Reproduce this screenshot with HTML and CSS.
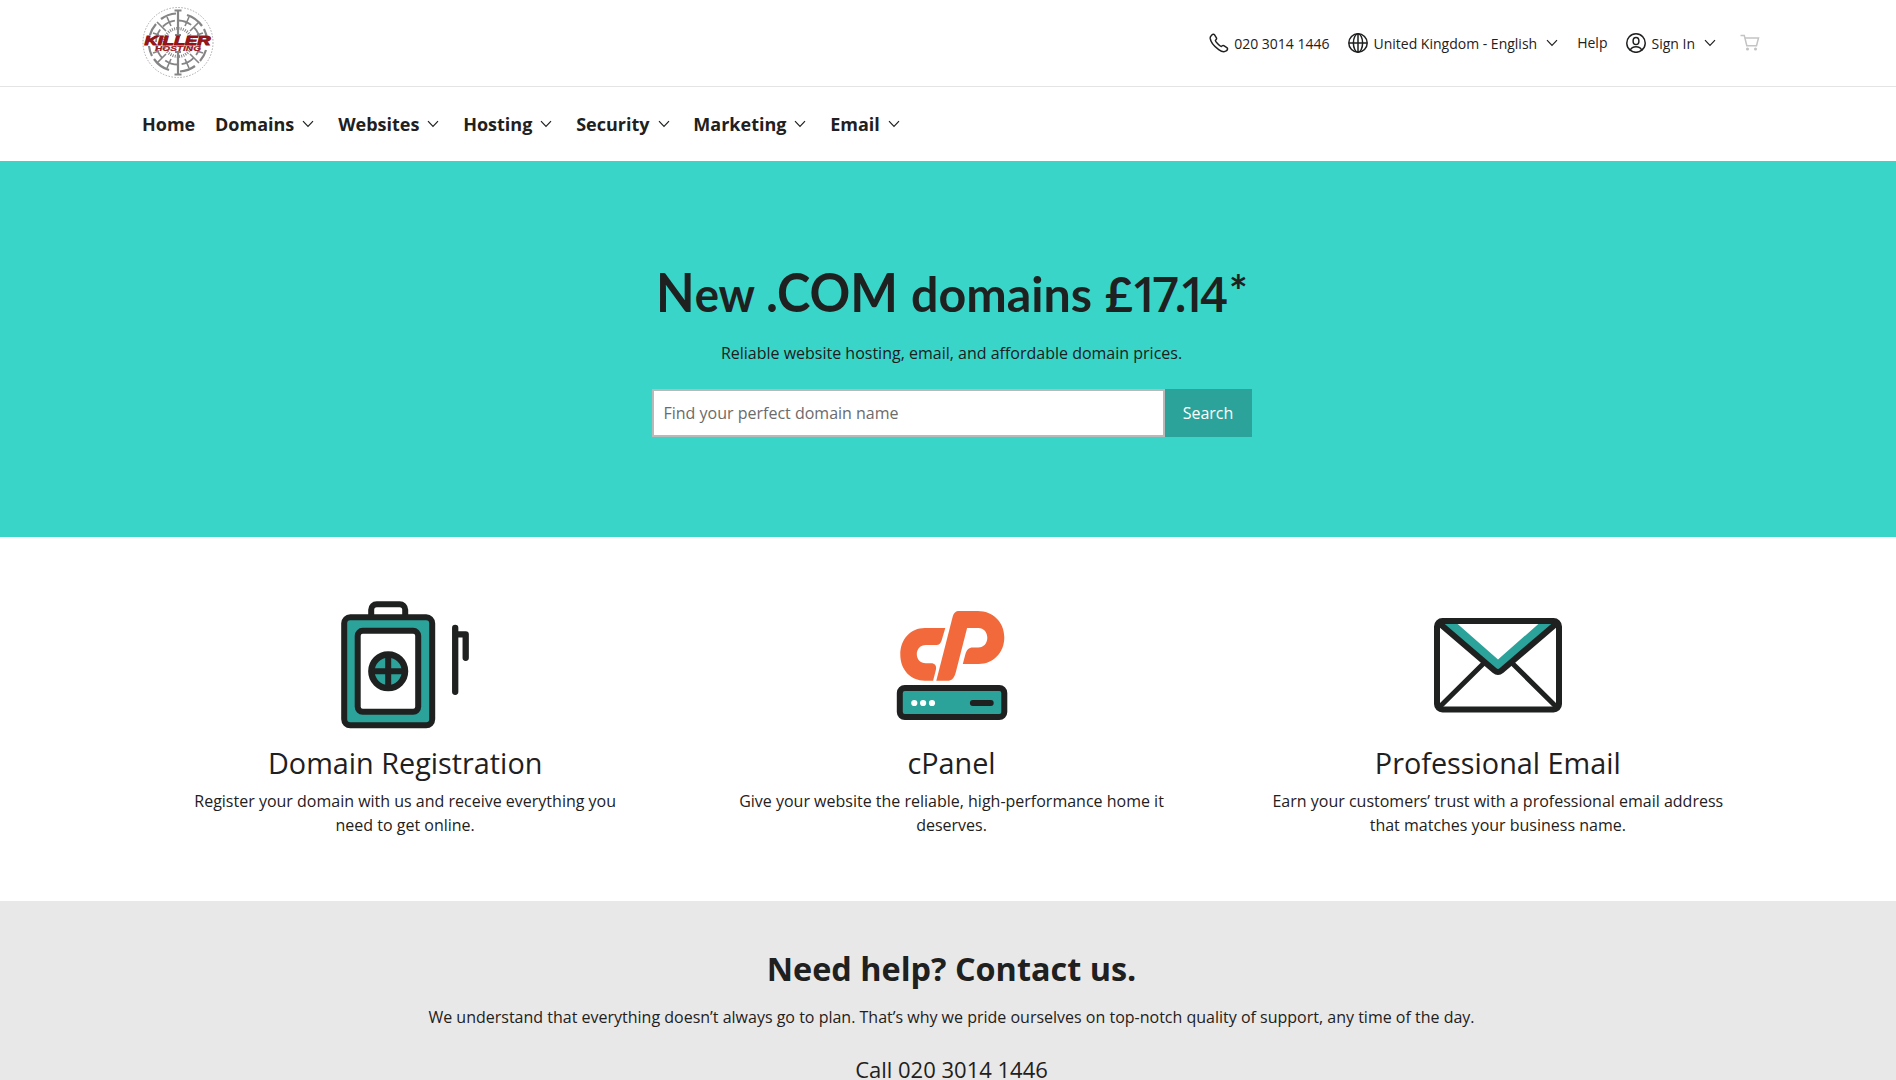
FILE: index.html
```html
<!DOCTYPE html>
<html lang="en-GB">
<head>
<meta charset="utf-8">
<title>Killer Hosting</title>
<link rel="stylesheet" href="styles.css">
</head>
<body>
<svg width="0" height="0" class="sprite"><symbol id="chev" viewBox="0 0 12 8"><path d="M1 1.2 6 6.4 11 1.2" fill="none" stroke="currentColor" stroke-width="1.2"/></symbol></svg>
<header class="topbar">
  <a class="logo" href="#">
    <svg width="72" height="74" viewBox="0 0 72 74">
      <circle cx="36" cy="36.500" r="35" fill="none" stroke="#aaa" stroke-width="1" stroke-dasharray="1.5 1.5"/>
      <g fill="none" stroke="#858585">
        <path d="M36 5V30M36 45V68" stroke-width="2.200"/>
        <path d="M32.500 4.500h7M32.500 68.500h7M33 29h6M33 46h6" stroke-width="2"/>
        <path d="M34 7.500A29 29 0 0 0 19 13M38 65.500A29 29 0 0 0 53 60M45 9A29 29 0 0 1 60 20M27 64A29 29 0 0 1 12 53M8 29A29 29 0 0 1 14 18M64 44A29 29 0 0 1 58 55M7 40A29 29 0 0 0 10 50M65 33A29 29 0 0 0 62 23" stroke-width="2.200"/>
        <circle cx="36" cy="36.500" r="22" stroke-width="1.800" stroke-dasharray="13.300 4"/>
        <circle cx="36" cy="36.500" r="14" stroke-width="3" stroke-dasharray="1 1.2"/>
        <path d="M15 16l9 9M57 16l-9 9M15 57l9-9M57 57l-9-9M25 11l4 9M47 11l-4 9M25 62l4-9M47 62l-4-9M11 27l6 2M61 27l-6 2M11 47l6-2M61 47l-6-2" stroke-width="1.600"/>
      </g>
      <text class="logo-name" x="2.500" y="39" textLength="66" lengthAdjust="spacingAndGlyphs">KILLER</text>
      <text class="logo-sub" x="13" y="45" textLength="46" lengthAdjust="spacingAndGlyphs">HOSTING</text>
    </svg>
  </a>
  <div class="tools">
    <a class="phone"><svg width="20" height="20" viewBox="0 0 20 20"><path d="M2.200 2.700C3.700.8 4.900.9 5.600 1.900L7.400 4.800C8.100 6 7 6.700 6.400 7.400 6.100 8.300 10.900 13.600 12.200 13.500 13.200 12.900 13.700 12 14.800 12.700L17.800 14.600C18.900 15.400 18.800 16.600 17.300 17.800 15.400 19.400 12.300 18.500 9.700 16.600 5.400 13.500 1.700 9.200 1.200 5.400 1.100 4.300 1.500 3.400 2.200 2.700Z"/></svg><span>020 3014 1446</span></a>
    <a class="region"><svg width="20" height="20" viewBox="0 0 20 20"><circle cx="10" cy="10" r="9.200"/><ellipse cx="10" cy="10" rx="4.600" ry="9.200"/><path d="M10 1v18M1 10h18"/></svg><span>United Kingdom - English</span><svg class="chev" width="12" height="8"><use href="#chev"/></svg></a>
    <a class="help"><span>Help</span></a>
    <a class="signin"><svg width="20" height="20" viewBox="0 0 20 20"><path d="M4.200 17.200A9.200 9.200 0 1 1 15.800 17.200"/><ellipse cx="10" cy="8" rx="2.900" ry="3.600"/><path d="M4.200 17.200C5.300 14.600 7.200 13.700 10 13.700S14.700 14.600 15.800 17.200C12.400 20 7.600 20 4.200 17.200Z"/></svg><span>Sign In</span><svg class="chev" width="12" height="8"><use href="#chev"/></svg></a>
    <a class="cart"><svg width="20" height="18" viewBox="0 0 20 18"><path d="M.5 1.500h3.800l2.500 10.200h9.700l2-7.700H5"/><circle cx="7.500" cy="15" r=".8"/><circle cx="15.500" cy="15" r=".8"/></svg></a>
  </div>
</header>
<nav class="menu">
  <a class="home">Home</a>
  <a>Domains<svg class="chev" width="12" height="8"><use href="#chev"/></svg></a>
  <a>Websites<svg class="chev" width="12" height="8"><use href="#chev"/></svg></a>
  <a>Hosting<svg class="chev" width="12" height="8"><use href="#chev"/></svg></a>
  <a>Security<svg class="chev" width="12" height="8"><use href="#chev"/></svg></a>
  <a>Marketing<svg class="chev" width="12" height="8"><use href="#chev"/></svg></a>
  <a>Email<svg class="chev" width="12" height="8"><use href="#chev"/></svg></a>
</nav>
<section class="hero">
  <h1>
    <svg width="600" height="68" viewBox="0 0 600 68">
      <text x="4" y="53" textLength="99" lengthAdjust="spacingAndGlyphs">N<tspan class="lower">ew</tspan></text>
      <text x="114" y="53" textLength="132" lengthAdjust="spacingAndGlyphs">.COM</text>
      <text class="lower" x="259" y="53" textLength="181" lengthAdjust="spacingAndGlyphs">domains</text>
      <text y="53"><tspan class="pound" x="453">£</tspan><tspan class="digits" x="479 500 522 527 548">17.14</tspan><tspan class="star" x="577" dy="-5">*</tspan></text>
    </svg>
  </h1>
  <p>Reliable website hosting, email, and affordable domain prices.</p>
  <form class="search"><input type="text" placeholder="Find your perfect domain name"><button type="button">Search</button></form>
</section>
<section class="features">
  <article>
    <svg width="128" height="128" viewBox="0.3 0.2 128 128">
      <path d="M30.500 15V9a5.500 5.500 0 0 1 5.500-5.500h23a5.500 5.500 0 0 1 5.500 5.500v6" fill="none" stroke="#1f2020" stroke-width="6"/>
      <rect x="3.500" y="16.500" width="88" height="108" rx="6" fill="#2ba39b" stroke="#1f2020" stroke-width="6"/>
      <rect x="17" y="30" width="60.500" height="81" rx="5" fill="#fff" stroke="#1f2020" stroke-width="6"/>
      <circle cx="47.500" cy="70.500" r="16.800" fill="#2ba39b" stroke="#1f2020" stroke-width="6.500"/>
      <path d="M47.500 54v33M31 70.500h33" stroke="#1f2020" stroke-width="6"/>
      <path d="M114.500 27v64M114.500 33.500H125V57" fill="none" stroke="#1f2020" stroke-width="6.300" stroke-linecap="round" stroke-linejoin="round"/>
    </svg>
    <h2>Domain Registration</h2>
    <p>Register your domain with us and receive everything you<br>need to get online.</p>
  </article>
  <article>
    <svg width="128" height="128" viewBox="-0.8 0 128 128">
      <g fill="#f26a3b">
        <path d="M57.500 27H37C23 27 12.500 38 12.500 53.500S23 79.700 37 79.700h8.300l2.700-10.500c1.200-4.500-1-7-4.800-7H38c-5.500 0-9-4-9-9s3.500-9.200 9-9.200h10.500c3 0 4.500-2 5.300-4.500Z"/>
        <path d="M71.500 10H90c15 0 26.500 11 26.500 26.500S105 63 91 63H75l2.500-9.500c1.200-4.500 3.500-7 7.500-7h5.500c5.500 0 9-4.500 9-9.800s-3.500-9.700-9-9.700H79.300L68 71.200c-1.500 6-4 8.500-8.500 8.500H48.500L64.800 16c1.200-4.300 3-6 6.700-6Z"/>
      </g>
      <rect x="12" y="87" width="104.500" height="29" rx="5" fill="#2ba39b" stroke="#1f2020" stroke-width="6"/>
      <g fill="#fff"><circle cx="26.500" cy="102" r="3.100"/><circle cx="35.300" cy="102" r="3.100"/><circle cx="44.200" cy="102" r="3.100"/></g>
      <path d="M85 102h18" stroke="#1f2020" stroke-width="5.800" stroke-linecap="round"/>
    </svg>
    <h2>cPanel</h2>
    <p>Give your website the reliable, high-performance home it<br>deserves.</p>
  </article>
  <article>
    <svg width="128" height="128" viewBox="0 0 128 128">
      <path d="M8 22 64 71.500 120 22h-14.500L64 58.500 22.500 22Z" fill="#2ba39b"/>
      <rect x="3" y="20" width="122" height="88.500" rx="5.500" fill="none" stroke="#1f2020" stroke-width="6"/>
      <path d="M5 22 60.500 69.500q3.500 3 7 0L123 22" fill="none" stroke="#1f2020" stroke-width="6"/>
      <path d="M4.500 107 50 62M123.500 107 78 62" stroke="#1f2020" stroke-width="5"/>
    </svg>
    <h2>Professional Email</h2>
    <p>Earn your customers’ trust with a professional email address<br>that matches your business name.</p>
  </article>
</section>
<section class="contact">
  <h2>Need help? Contact us.</h2>
  <p>We understand that everything doesn’t always go to plan. That’s why we pride ourselves on top-notch quality of support, any time of the day.</p>
  <p class="call">Call 020 3014 1446</p>
</section>
</body>
</html>
```
FILE: styles.css
```css
* { box-sizing: border-box; }
body {
  margin: 0;
  height: 1080px;
  overflow: hidden;
  background: #fff;
  color: #1f2020;
  font: 16px/24px "Open Sans", "Liberation Sans", sans-serif;
}
h1, h2, p { margin: 0; }
.sprite { display: none; }
.topbar {
  height: 87px;
  padding: 0 137px 0 142px;
  border-bottom: 1px solid #e4e4e4;
  display: flex;
  align-items: center;
  justify-content: space-between;
}
.logo { display: flex; }
.logo-name, .logo-sub {
  fill: #a4161a;
  stroke: #8c1418;
  font-family: "Liberation Sans", sans-serif;
  font-weight: 700;
  font-style: italic;
}
.logo-name { font-size: 13px; stroke-width: 1px; }
.logo-sub { font-size: 6.5px; stroke-width: .2px; }
.tools { display: flex; font-size: 14px; margin-right: -6px; }
.tools a { display: flex; align-items: center; }
.tools svg { fill: none; stroke: #1f2020; stroke-width: 1.5; }
.tools a > svg:first-child { margin-right: 5px; }
.tools span { padding-top: 1px; }
.chev { margin-left: 9px; }
.region { margin-left: 19px; }
.help { margin-left: 19px; }
.tools .help span { padding: 0; }
.signin { margin-left: 19px; }
.cart { margin-left: 24px; }
.tools .cart svg { stroke: #c4c4c4; margin: 0; }
.menu {
  height: 74px;
  padding-left: 142px;
  display: flex;
  align-items: center;
  gap: 23.8px;
  font-size: 18px;
  font-weight: 700;
}
.menu a { display: flex; align-items: center; }
.menu .home { margin-right: -4px; }
.menu .chev { margin-left: 8px; }
.hero {
  height: 376px;
  padding: 98px 0 0 7px;
  background: #39d5c9;
  display: flex;
  flex-direction: column;
  align-items: center;
}
h1 { font: 700 53px/68px Lato, sans-serif; }
h1 svg { display: block; fill: #1f2020; }
.lower, .pound { font-size: 48px; }
.digits { font-family: "Open Sans", sans-serif; font-size: 48px; font-weight: 600; }
.star { font-size: 44px; }
.hero p { margin-top: 14px; }
.search { display: flex; margin-top: 24px; width: 600px; height: 48px; }
.search input {
  flex: 1;
  border: 2px solid #b9b9b9;
  padding: 0 10px;
  font: inherit;
}
.search input::placeholder { color: #6b6b6b; }
.search button {
  width: 87px;
  border: 0;
  background: #2ba39b;
  color: #fff;
  font: inherit;
}
.features {
  height: 364px;
  padding: 64px 125px 0 132px;
  display: grid;
  grid-template-columns: repeat(3, 1fr);
  text-align: center;
}
.features svg { display: block; margin: 0 auto; }
.features h2 { margin-top: 14px; font-weight: 400; font-size: 28.8px; line-height: 40px; }
.features p { margin-top: 6px; }
.contact { height: 179px; padding: 45px 0 0 7px; background: #e8e8e8; text-align: center; }
.contact h2 { font-size: 32.4px; line-height: 44px; }
.contact p { margin-top: 15px; }
.contact .call { margin-top: 24px; font-size: 22px; line-height: 32px; }
```
